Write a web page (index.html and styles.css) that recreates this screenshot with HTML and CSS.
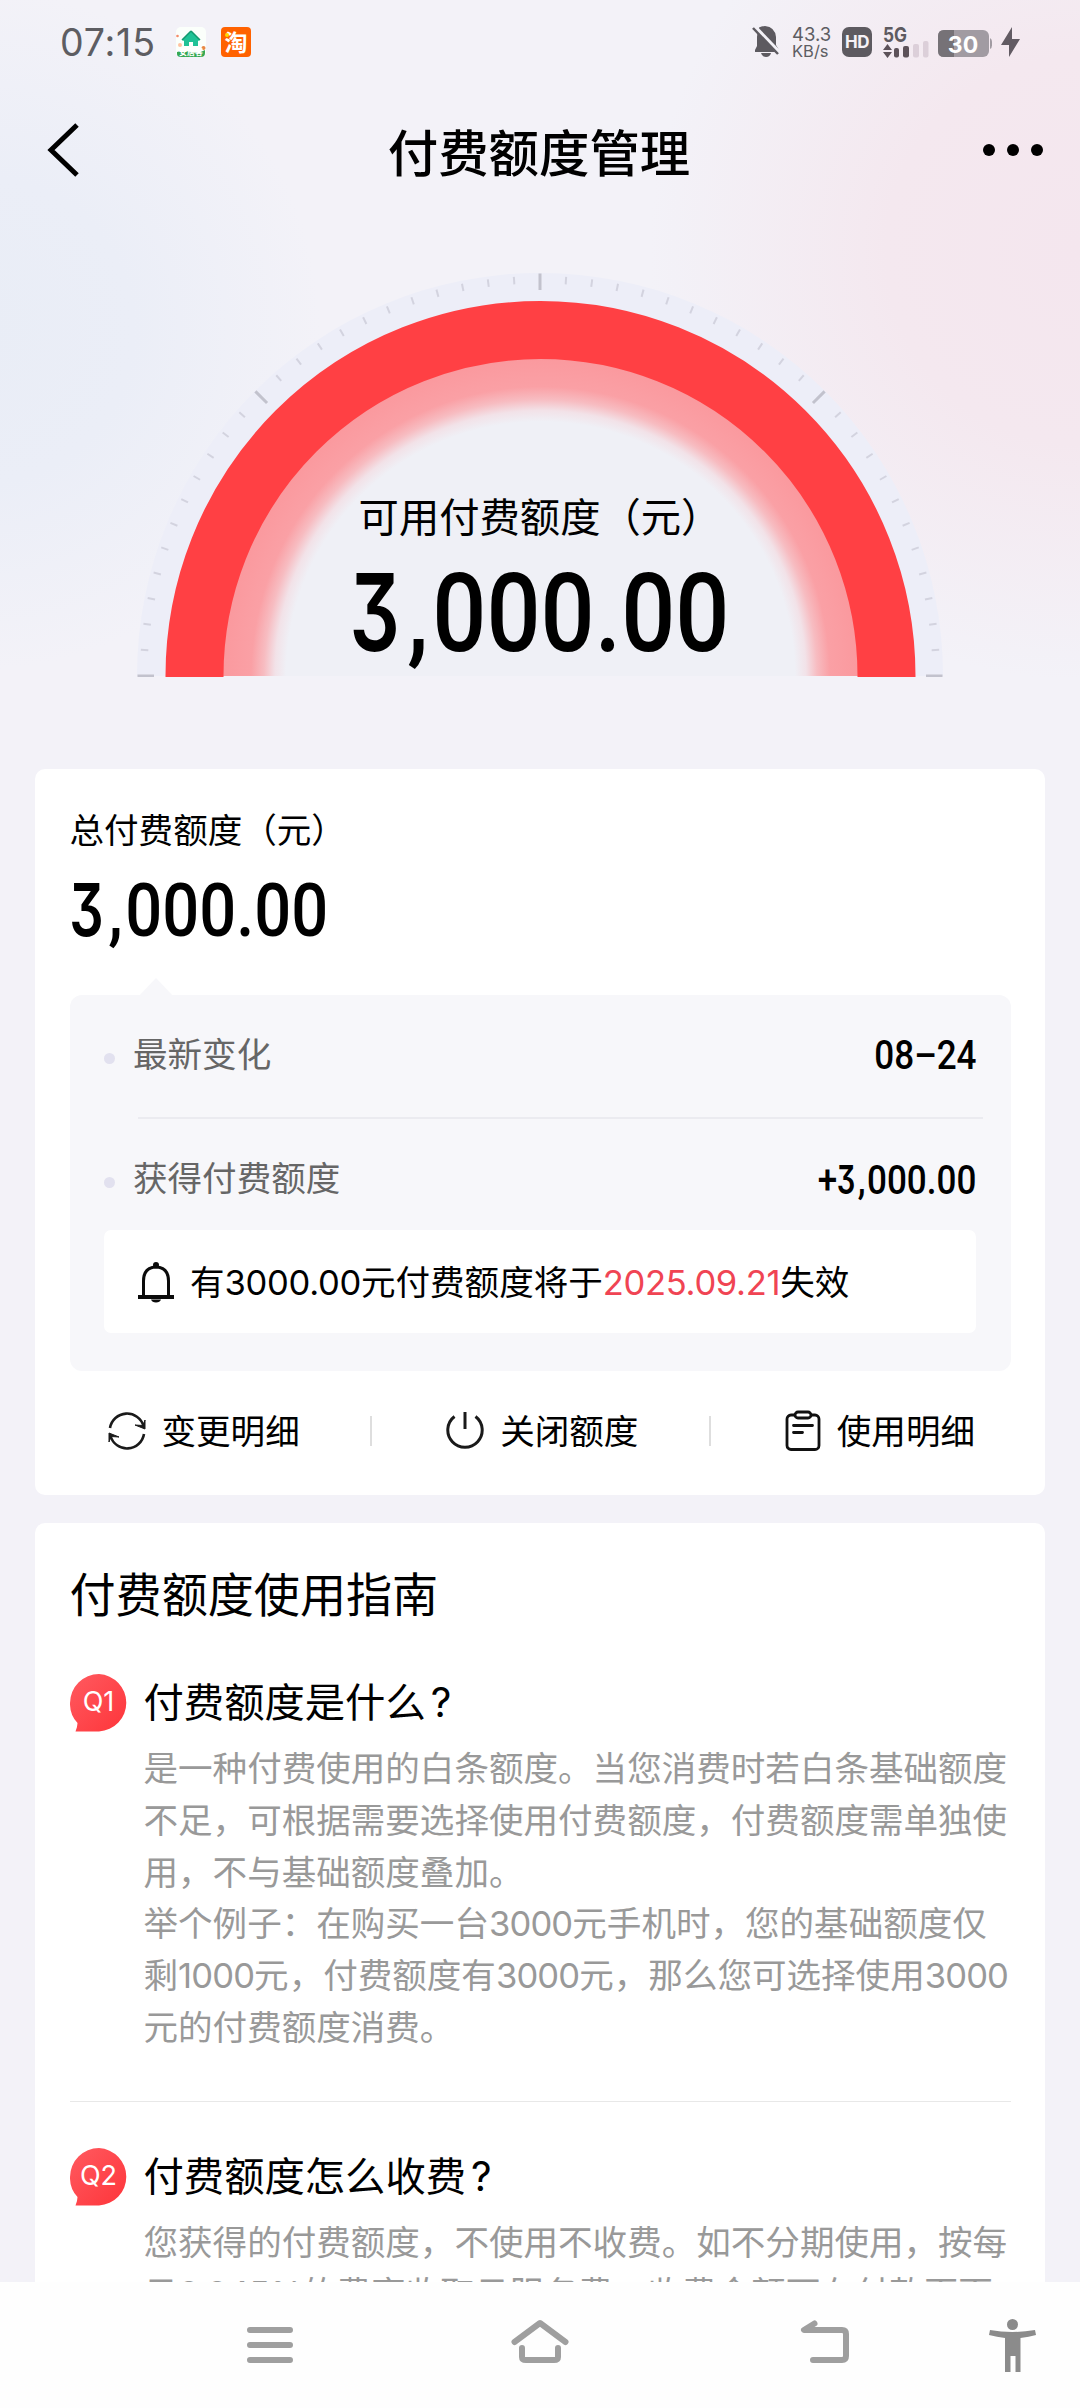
FILE: index.html
```html
<!DOCTYPE html>
<html lang="zh-CN">
<head>
<meta charset="utf-8">
<title>付费额度管理</title>
<link rel="stylesheet" href="styles.css">
</head>
<body>
<div class="screen">
  <div class="status">
    <span class="clock">07:15</span>
    <svg class="app-icon" width="30" height="30" viewBox="0 0 30 30">
      <rect width="30" height="30" rx="5" fill="#fbfffb"/>
      <path d="M1 25q6-2 14 0t14-2v3q0 4-4 4H5q-4 0-4-3z" fill="#35a853"/>
      <path d="M15 4L6 13l2 1v5h5v-4h4v4h5v-5l2-1z" fill="#1fc296"/>
      <path d="M15 4l-9 9M15 4l9 9" stroke="#12996f" stroke-width="1.5"/>
      <circle cx="4" cy="18" r="2" fill="#ffc2a0"/><circle cx="1.500" cy="9" r="1.300" fill="#f58a6a"/><circle cx="27.500" cy="21" r="2" fill="#e88645"/>
      <text x="15" y="27.500" text-anchor="middle" class="app-label">安居客</text>
    </svg>
    <svg class="app-icon" width="30" height="30" viewBox="0 0 30 30">
      <rect width="30" height="30" rx="4" fill="#ff6200"/>
      <text x="15" y="23.500" text-anchor="middle" class="tao">淘</text>
      <circle cx="6" cy="8" r="2" fill="#ffd800"/>
    </svg>
    <span class="grow"></span>
    <svg class="s-bell" width="28" height="32" viewBox="0 0 28 32">
      <path d="M7 1.500Q10 0 13 0q10 1 11 11v8l3 5v2H3v-2l2-4v-9q0-5 2-9z" fill="#5d5a60"/>
      <path d="M9 27h10q-1 4-5 4t-5-4z" fill="#5d5a60"/>
      <path d="M2 0l25 26" stroke="#f3f1f7" stroke-width="4"/>
      <path d="M1 2l25 26" stroke="#5d5a60" stroke-width="2.500"/>
    </svg>
    <span class="speed"><span>43.3</span><small>KB/s</small></span>
    <span class="hd">HD</span>
    <svg class="signal" width="46" height="32" viewBox="0 0 46 32">
      <text x="0" y="15.500" class="fiveg" textLength="24" lengthAdjust="spacingAndGlyphs">5G</text>
      <path d="M0 24l4.500-6 4.500 6zM0 26l4.500 6 4.500-6z" fill="#5d5259"/>
      <rect x="11" y="22" width="5" height="9.500" rx="2" fill="#5d5259"/>
      <rect x="20" y="20" width="6" height="11.500" rx="2" fill="#5d5259"/>
      <rect x="30" y="18" width="6" height="13.500" rx="2" fill="#dccfd9"/>
      <rect x="40" y="15" width="5.500" height="16.500" rx="2" fill="#dccfd9"/>
    </svg>
    <svg class="battery" width="54" height="28" viewBox="0 0 54 28">
      <rect width="51" height="27" rx="6" fill="#a19ba2"/>
      <path d="M52 8q2 1 2 3.500v4q0 2.500-2 3.500z" fill="#a19ba2"/>
      <path d="M6 0h10v27H6q-6 0-6-6V6q0-6 6-6z" fill="#767277"/>
      <text x="25" y="22.500" text-anchor="middle" class="pct">30</text>
    </svg>
    <svg width="19" height="30" viewBox="0 0 19 30"><path d="M11 0v12h8L8 30V18H0z" fill="#625b63"/></svg>
  </div>

  <div class="titlebar">
    <svg width="36" height="60" viewBox="0 0 36 60"><path d="M33 5L7 30l26 25" fill="none" stroke="#000" stroke-width="5"/></svg>
    <h1>付费额度管理</h1>
    <svg width="62" height="14" viewBox="0 0 62 14"><circle cx="6" cy="7" r="6"/><circle cx="30" cy="7" r="6"/><circle cx="54" cy="7" r="6"/></svg>
  </div>

  <div class="gauge">
    <svg class="dial" width="810" height="406" viewBox="-405 -405 810 406">
      <defs>
        <radialGradient id="glow" gradientUnits="userSpaceOnUse" cx="0.500" cy="0" r="318">
          <stop offset="0" stop-color="#eff0f6"/><stop offset=".80" stop-color="#eff0f6"/>
          <stop offset=".835" stop-color="#f2e2e8"/><stop offset=".87" stop-color="#f7bcc1"/>
          <stop offset=".91" stop-color="#faa0a5"/><stop offset="1" stop-color="#fa999e"/>
        </radialGradient>
      </defs>
      <path d="M-403 0a403 403 0 0 1 806 0z" fill="#edeef8"/>
      <path d="M-318 0a318.500 318.500 0 0 1 637 0z" fill="url(#glow)"/>
      <path d="M-345.500 1V0a346 346 0 0 1 692 0v1" fill="none" stroke="#ff4044" stroke-width="58"/>
      <g id="ticks"></g>
    </svg>
    <div class="reading">
      <p class="gauge-label">可用付费额度（元）</p>
      <div class="num num-xl"><span class="three">3</span><span class="comma">,</span>000.00</div>
    </div>
  </div>

  <section class="card summary">
    <p class="label">总付费额度（元）</p>
    <div class="num num-lg"><span class="three">3</span><span class="comma">,</span>000.00</div>
    <div class="panel">
      <svg class="notch" width="34" height="18" viewBox="0 0 34 18"><path d="M0 18L17 0l17 18z" fill="#f7f7fa"/></svg>
      <div class="row"><i></i><span>最新变化</span><b class="num num-sm">08–24</b></div>
      <hr>
      <div class="row second"><i></i><span>获得付费额度</span><b class="num num-sm">+<span class="three">3</span><span class="comma">,</span>000.00</b></div>
      <div class="notice">
        <svg width="36" height="42" viewBox="0 0 36 42" fill="none" stroke="#0b0b0b" stroke-width="3">
          <path d="M5.500 35V20q0-13.500 12.500-14 12.500.5 12.500 14v15"/><path d="M0 36h36" stroke-width="4"/>
          <circle cx="18" cy="4" r="3" fill="#0b0b0b" stroke="none"/><path d="M13 38.500h10q-1 3-5 3t-5-3z" fill="#0b0b0b" stroke="none"/>
        </svg>
        <p>有<span class="d">3000.00</span>元付费额度将于<span class="d red">2025.09.21</span>失效</p>
      </div>
    </div>
    <div class="actions">
      <div class="action">
        <svg width="38" height="40" viewBox="0 0 38 40" fill="none" stroke="#1a1a1a" stroke-width="2.600">
          <path d="M2 17a17.200 17.200 0 0 1 33.500-2M36 23a17.200 17.200 0 0 1-33.500 2"/>
          <path d="M37 9v9l-10-4 8 .5zM1 31v-9l10 4-8-.5z" fill="#1a1a1a" stroke-width="1"/>
        </svg>
        <span>变更明细</span>
      </div>
      <em></em>
      <div class="action">
        <svg width="38" height="40" viewBox="0 0 38 40" fill="none" stroke="#1a1a1a" stroke-width="3">
          <path d="M8.500 5.500a17.200 17.200 0 1 0 21 0M19 1v17"/>
        </svg>
        <span>关闭额度</span>
      </div>
      <em></em>
      <div class="action">
        <svg width="36" height="42" viewBox="0 0 36 42" fill="none" stroke="#111" stroke-width="2.800">
          <rect x="2" y="5" width="32" height="34.500" rx="4"/>
          <rect x="10" y="2" width="16" height="6" rx="3" fill="#fff"/>
          <path d="M8.500 15.500h19M8.500 22.500h9" stroke-linecap="round"/>
        </svg>
        <span>使用明细</span>
      </div>
    </div>
  </section>

  <section class="card guide">
    <h2>付费额度使用指南</h2>
    <article>
      <div class="q"><svg width="58" height="58" viewBox="0 0 58 58"><defs><linearGradient id="red" x1="0" y1="0" x2="1" y2="1"><stop offset="0" stop-color="#ff5a60"/><stop offset="1" stop-color="#fe353a"/></linearGradient></defs><path d="M29 0a29 28.800 0 0 1 0 57.500H5.500q2-5 2-8.500A28.500 28.500 0 0 1 0 29 29 29 0 0 1 29 0z" fill="url(#red)"/><text x="28.500" y="37" text-anchor="middle" class="qn">Q1</text></svg></div>
      <div class="qa">
        <h3>付费额度是什么<span class="qm">?</span></h3>
        <p>是一种付费使用的白条额度。当您消费时若白条基础额度<br>不足，可根据需要选择使用付费额度，付费额度需单独使<br>用，不与基础额度叠加。<br>举个例子：在购买一台<span class="d">3000</span>元手机时，您的基础额度仅<br>剩<span class="d">1000</span>元，付费额度有<span class="d">3000</span>元，那么您可选择使用<span class="d">3000</span><br>元的付费额度消费。</p>
      </div>
    </article>
    <article class="next">
      <div class="q"><svg width="58" height="58" viewBox="0 0 58 58"><path d="M29 0a29 28.800 0 0 1 0 57.500H5.500q2-5 2-8.500A28.500 28.500 0 0 1 0 29 29 29 0 0 1 29 0z" fill="url(#red)"/><text x="28.500" y="37" text-anchor="middle" class="qn">Q2</text></svg></div>
      <div class="qa">
        <h3>付费额度怎么收费<span class="qm">?</span></h3>
        <p>您获得的付费额度，不使用不收费。如不分期使用，按每<br>日<span class="d">0.045%</span>的费率收取日服务费，收费金额可在付款页面</p>
      </div>
    </article>
  </section>

  <nav class="navbar">
    <svg width="1080" height="126" viewBox="0 2282 1080 126" fill="none" stroke="#9f9f9f" stroke-width="6" stroke-linecap="round" stroke-linejoin="round">
      <path d="M250 2330h40M250 2345h40M250 2360h40"/>
      <path d="M514.500 2342L540 2323l25.500 19M522 2348v9q0 3 4 3h28q4 0 4-3v-9"/>
      <path d="M814.500 2323.500L804 2330h38q4 0 4 4v22q0 4-4 4h-29"/>
      <g fill="#8b8b8b" stroke="none"><circle cx="1012.500" cy="2324.500" r="5.500"/><path d="M990 2330q22 4 45 0l1 5q-7 2-15.500 3v34h-5v-16h-5v16h-5.500v-34q-8-1-16-3z"/></g>
    </svg>
  </nav>
</div>
<script src="ticks.js"></script>
</body>
</html>
```
FILE: ticks.js
```js
// Dial ticks: one every 3.75 degrees, a long one every 45 degrees
var ticks = document.getElementById('ticks');
for (var i = 0; i <= 48; i++) {
  var major = i % 12 === 0;
  var line = document.createElementNS('http://www.w3.org/2000/svg', 'line');
  line.setAttribute('x1', major ? -402.5 : -400);
  line.setAttribute('x2', major ? -386 : -392.5);
  line.setAttribute('y1', 0);
  line.setAttribute('y2', 0);
  line.setAttribute('class', major ? 'tick major' : 'tick');
  line.setAttribute('transform', 'rotate(' + i * 3.75 + ')');
  ticks.appendChild(line);
}
```
FILE: styles.css
```css
* { box-sizing: border-box; margin: 0; padding: 0; }
body {
  width: 1080px; height: 2408px; overflow: hidden;
  font-family: "Noto Sans CJK SC", sans-serif;
  color: #000;
}
svg { display: block; flex: none; }
.screen {
  width: 1080px; height: 2408px; overflow: hidden;
  display: flex; flex-direction: column;
  background:
    radial-gradient(circle 430px at 1080px 250px, #f4e6ee 0, #f4e8ef 45%, rgba(244, 236, 244, 0) 100%),
    radial-gradient(circle 340px at -20px 330px, #e9edf6 0, #ebeef7 45%, rgba(238, 239, 248, 0) 100%),
    #f3f2f8;
}

.status { height: 84px; padding: 0 60px; display: flex; align-items: center; flex: none; color: #5d5d62; }
.clock { font: 400 37.500px/48px Inter, sans-serif; letter-spacing: .8px; width: 116px; padding-top: 2px; }
.app-icon { margin-right: 15px; }
.app-label { font: 700 8px "Noto Sans CJK SC", sans-serif; fill: #fff; }
.tao { font: 700 23px "Noto Sans CJK SC", sans-serif; fill: #fff; }
.grow { flex: 1; }
.s-bell { margin-right: 12px; }
.speed { font: 400 18.500px/17px Inter, sans-serif; width: 50px; padding-top: 2px; display: flex; flex-direction: column; }
.speed small { font-size: 16.500px; }
.hd { width: 30px; height: 30px; border-radius: 7px; background: #5d5a60; color: #f5f2f7; font: 700 17px/31px Inter, sans-serif; text-align: center; letter-spacing: -.5px; margin-right: 11px; }
.signal { margin-right: 9px; }
.fiveg { font: 700 20px Inter, sans-serif; fill: #5d5a60; }
.battery { margin: 3px 9px 0 0; }
.pct { font: 700 23px Inter, sans-serif; fill: #fff; }

.titlebar { height: 132px; padding: 0 35px 0 44px; display: flex; align-items: center; justify-content: space-between; flex: none; }
.titlebar h1 { font-size: 50.400px; line-height: 60px; font-weight: 500; padding-top: 2px; margin-left: 15px; }

.gauge { height: 553px; padding-top: 55px; display: grid; justify-items: center; align-items: start; flex: none; }
.dial, .reading { grid-area: 1 / 1; }
.tick { stroke: #d3d3df; stroke-width: 2; }
.tick.major { stroke: #c2c2cd; stroke-width: 3; }
.reading { padding-top: 214px; text-align: center; }
.gauge-label { font-size: 40.320px; line-height: 60px; }

/* Amounts: condensed digits with a flat-topped three */
.num { font-family: Roboto, sans-serif; font-weight: 500; white-space: nowrap; transform: scaleX(.87); }
.three { display: inline-block; width: .56em; margin-left: -.02em; font-family: Inter, sans-serif; font-size: .975em; font-weight: 600; font-feature-settings: "cv09"; transform: scaleX(.85); transform-origin: left; }
.comma { margin: 0 .04em 0 .06em; }
.num-xl { font-size: 109.500px; line-height: 110px; margin-top: 13px; }
.num-lg { font-size: 74.800px; line-height: 80px; transform-origin: left; }
.num-sm { font-size: 40.300px; line-height: 50px; transform-origin: right; margin-left: auto; }

.card { width: 1010px; margin: 0 35px; border-radius: 10px; background: #fff; flex: none; }
.summary { height: 726px; padding: 33px 34px 0 34.500px; }
.label { font-size: 34.560px; line-height: 52px; }
.summary .num-lg { margin-top: 16px; }
.panel { position: relative; height: 376px; margin-top: 44px; padding: 0 35px 0 34.500px; border-radius: 12px; background: #f7f7fa; }
.notch { position: absolute; left: 69px; top: -17px; }
.row { height: 122px; display: flex; align-items: center; font-size: 34.560px; color: #666; }
.row > span { margin-top: -8px; }
.row i { width: 11px; height: 11px; border-radius: 50%; background: #e2e1ef; margin: 4px 18px 0 0; }
.row b { color: #000; }
.panel hr { height: 2px; border: 0; background: #ebebf0; margin: 0 -7px 0 34px; }
.row.second { height: 111px; padding-top: 11px; }
.notice { height: 103px; border-radius: 7px; background: #fff; display: flex; align-items: center; padding-left: 34px; font-size: 34.560px; }
.notice p { margin: -4px 0 0 16px; white-space: nowrap; line-height: 52px; }
.d { font-family: Inter, sans-serif; letter-spacing: -.85px; line-height: 0; }
.notice .d { letter-spacing: -.3px; }
.red { color: #f04453; }
.actions { height: 120px; padding: 0 36px 0 38px; display: flex; align-items: center; justify-content: space-between; font-size: 34.560px; }
.action { display: flex; align-items: center; gap: 16px; }
.action span { margin-top: -4px; }
.actions em { width: 2px; height: 30px; background: #dedede; margin-right: 4px; }

.guide { height: 759px; margin-top: 28px; padding: 39px 34px 0 34.500px; border-radius: 10px 10px 0 0; overflow: hidden; }
.guide h2 { font-size: 46.080px; line-height: 60px; font-weight: 400; }
.guide article { display: flex; margin-top: 52px; }
.guide article.next { margin-top: 49px; border-top: 1px solid #e8e8e8; padding-top: 46px; }
.q { width: 74px; }
.qn { font: 400 27px Inter, sans-serif; fill: #fff; }
.guide h3 { font-size: 40.320px; line-height: 52px; height: 56px; font-weight: 400; }
.qm { font-family: Inter, sans-serif; margin-left: 5px; line-height: 0; }
.qa p { margin-top: 11px; font-size: 34.560px; line-height: 51.750px; color: #999; white-space: nowrap; }

.navbar { height: 126px; background: #fefefe; flex: none; }
```
